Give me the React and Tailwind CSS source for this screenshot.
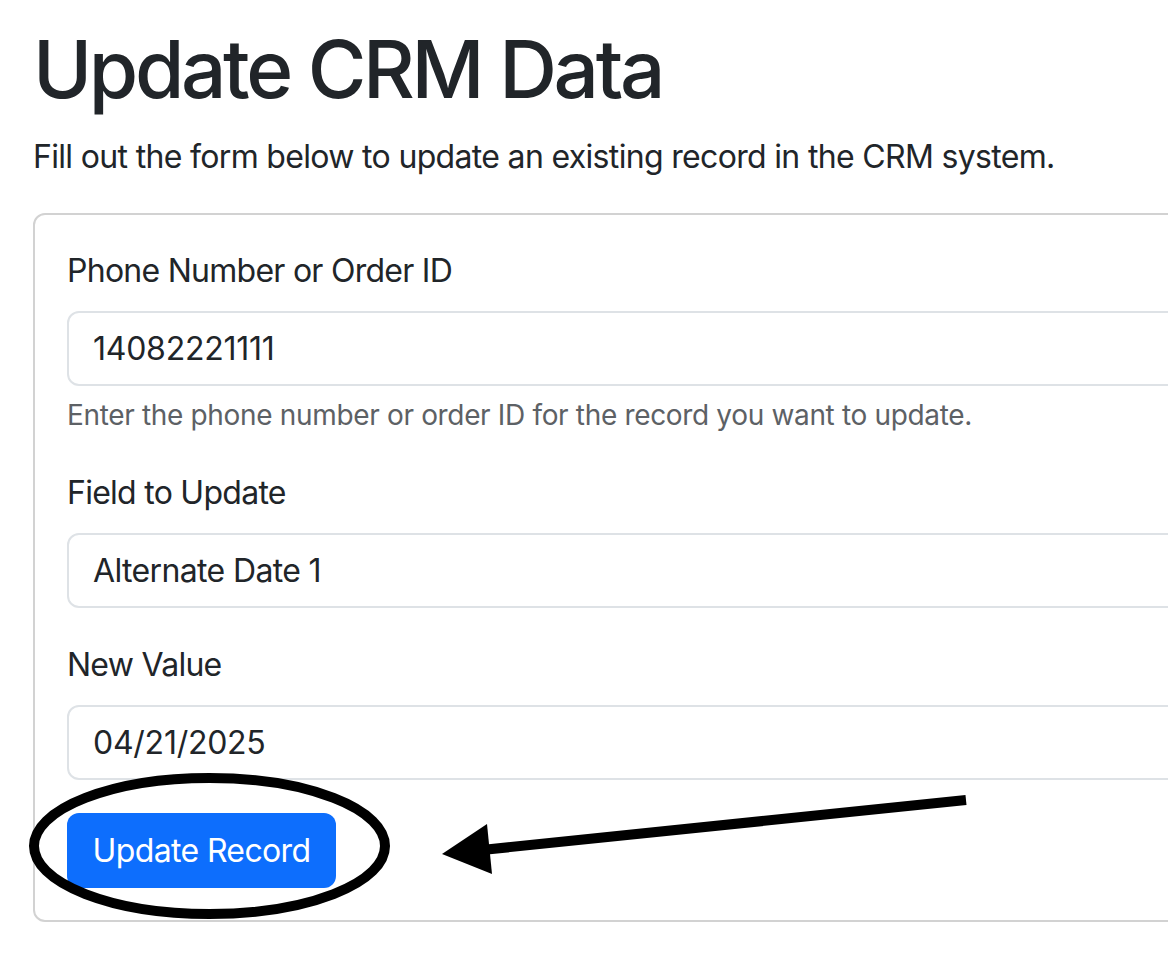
import React from 'react'

// Annotation overlay: hand-drawn circle around the button and an arrow pointing at it
function Annotation() {
    return (
        <svg className="pointer-events-none absolute left-0 top-0" width="1168" height="954" viewBox="0 0 1168 954">
            <ellipse cx="209.5" cy="846" rx="175.5" ry="68" fill="none" stroke="#000" strokeWidth="10" />
            <line x1="966" y1="800" x2="482" y2="850" stroke="#000" strokeWidth="10" />
            <polygon points="442,854 487,824 492,874" fill="#000" />
        </svg>
    )
}

function Field({ label, value, help, select }) {
    return (
        <div className="mb-[33px]">
            <label className="mb-[16px] block text-[32px] leading-[48px] tracking-[-0.023em]">{label}</label>
            {select ? (
                <select
                    defaultValue={value}
                    className="block h-[75px] w-full appearance-none rounded-[12px] border-2 border-[#dee2e6] bg-white px-[24px] text-[32px] tracking-[-0.02em] text-[#212529] outline-none"
                >
                    <option>{value}</option>
                </select>
            ) : (
                <input
                    readOnly
                    value={value}
                    className="block h-[75px] w-full rounded-[12px] border-2 border-[#dee2e6] bg-white px-[24px] text-[32px] tracking-[-0.008em] text-[#212529] outline-none"
                />
            )}
            {help && <div className="mt-[8px] text-[28px] leading-[42px] tracking-[-0.012em] text-[#5d6165]">{help}</div>}
        </div>
    )
}

export default function App() {
    return (
        <div className="relative h-[954px] w-[1168px] overflow-hidden bg-white font-['Inter',sans-serif] text-[#212529]">
            <div className="pl-[33px] pt-[21px]">
                <h1 className="mb-[16px] text-[80px] font-medium leading-[96px] tracking-[-0.042em]">Update CRM Data</h1>
                <p className="mb-[32px] text-[32px] leading-[48px] tracking-[-0.021em]">
                    Fill out the form below to update an existing record in the CRM system.
                </p>

                <div className="-mr-[80px] rounded-[12px] border-2 border-[#d2d2d2] p-[32px]">
                    <Field
                        label="Phone Number or Order ID"
                        value="14082221111"
                        help="Enter the phone number or order ID for the record you want to update."
                    />
                    <Field label="Field to Update" value="Alternate Date 1" select />
                    <Field label="New Value" value="04/21/2025" />
                    <button className="h-[75px] w-[269px] rounded-[12px] bg-[#0d6efd] text-[32px] tracking-[-0.02em] text-white">
                        Update Record
                    </button>
                </div>
            </div>
            <Annotation />
        </div>
    )
}
